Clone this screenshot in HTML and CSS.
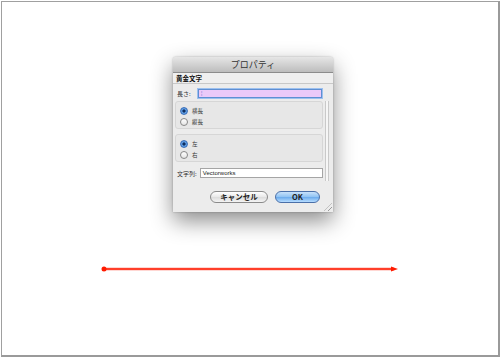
FILE: index.html
```html
<!DOCTYPE html>
<html lang="ja">
<head>
    <meta charset="UTF-8">
    <title>プロパティ</title>
    <link rel="stylesheet" href="styles.css">
</head>
<body>
    <div class="canvas">
        <div class="dialog">
            <div class="titlebar">プロパティ</div>
            <div class="header">黄金文字</div>
            <div class="field">
                <span class="label">長さ:</span>
                <span class="input focused">¦</span>
            </div>
            <div class="content">
                <div class="pane">
                    <div class="group">
                        <div class="radio"><span class="dot on"></span>横長</div>
                        <div class="radio"><span class="dot"></span>縦長</div>
                    </div>
                    <div class="group">
                        <div class="radio"><span class="dot on"></span>左</div>
                        <div class="radio"><span class="dot"></span>右</div>
                    </div>
                    <div class="field text-row">
                        <span class="label">文字列:</span>
                        <span class="input">Vectorworks</span>
                    </div>
                </div>
                <div class="track"></div>
            </div>
            <div class="buttons">
                <button class="btn">キャンセル</button>
                <button class="btn primary">OK</button>
            </div>
            <div class="grip"></div>
        </div>
        <svg class="shape" width="300" height="10" viewBox="0 0 300 10">
            <line x1="4" y1="5" x2="294" y2="5" stroke="#ffb0a8" stroke-width="3.2"/>
            <line x1="4" y1="5" x2="294" y2="5" stroke="#ff1a00" stroke-width="1.6"/>
            <circle cx="4" cy="5" r="2.5" fill="#ff1a00"/>
            <polygon points="291,2.6 298,5 291,7.4" fill="#ff1a00"/>
        </svg>
    </div>
</body>
</html>
```

FILE: styles.css
```css
body {
    margin: 0;
    background: #fff;
    font-family: "Liberation Sans", "Noto Sans CJK JP", sans-serif;
}
.canvas {
    margin: 1px 0 0 1px;
    width: 496px;
    height: 353px;
    border: 1px solid #a0a0a0;
    border-right: 2px solid #9a9a9a;
    border-bottom: 2px solid #9a9a9a;
    overflow: hidden;
}
.dialog {
    position: relative;
    margin: 55px 0 0 171px;
    width: 160px;
    height: 155px;
    background: #ececec;
    border-radius: 3px 3px 0 0;
    box-shadow: 0 9px 22px rgba(0, 0, 0, 0.45), 0 0 2px rgba(0, 0, 0, 0.3);
    display: flex;
    flex-direction: column;
}
.titlebar {
    height: 15px;
    line-height: 15px;
    text-align: center;
    font-family: "Noto Sans CJK JP", sans-serif;
    font-size: 9px;
    color: #333;
    background: linear-gradient(#e6e6e6, #bdbdbd);
    border-bottom: 1px solid #8c8c8c;
    border-radius: 3px 3px 0 0;
}
.header {
    height: 10px;
    line-height: 10px;
    padding-left: 3px;
    font-family: "Noto Sans CJK JP", sans-serif;
    font-size: 6.5px;
    font-weight: bold;
    color: #111;
    background: #efefef;
    border-bottom: 1px solid #c8c8c8;
}
.field {
    display: flex;
    align-items: center;
    height: 12px;
    margin-top: 3px;
    padding-left: 4px;
}
.label {
    width: 21px;
    font-family: "Noto Sans CJK JP", sans-serif;
    font-size: 6px;
    color: #333;
}
.input {
    width: 120px;
    height: 8px;
    line-height: 8px;
    padding-left: 2px;
    font-size: 6px;
    color: #222;
    background: #fff;
    border: 1px solid #a5a5a5;
}
.input.focused {
    height: 7px;
    line-height: 7px;
    background: #ebc9f9;
    border: 1px solid #5f8fd2;
    box-shadow: 0 0 0 1px #9cc0ef;
    color: #6a6ad0;
    font-size: 5px;
}
.content {
    display: flex;
    height: 80px;
    margin-top: 2px;
}
.pane {
    width: 148px;
    margin-left: 2px;
}
.group {
    height: 23px;
    margin-bottom: 5px;
    padding: 3px 0 0 4px;
    background: #e7e7e7;
    border: 1px solid #d6d6d6;
    border-radius: 3px;
}
.radio {
    display: flex;
    align-items: center;
    height: 11px;
    font-family: "Noto Sans CJK JP", sans-serif;
    font-size: 5.5px;
    color: #333;
}
.dot {
    width: 6px;
    height: 6px;
    margin-right: 4px;
    border: 1px solid #888;
    border-radius: 50%;
    background: linear-gradient(#fff, #e4e4e4);
}
.dot.on {
    border-color: #3c6fb8;
    background: radial-gradient(circle, #0c2c60 0, #0c2c60 1.4px, #6aa8ea 1.8px, #3f82d8 100%);
}
.text-row {
    margin-top: 0;
    padding-left: 2px;
}
.text-row .input {
    margin-left: 2px;
}
.track {
    width: 2px;
    margin-left: 2px;
    border-left: 1px solid #c9c9c9;
    border-right: 1px solid #c9c9c9;
    background: #f6f6f6;
}
.buttons {
    display: flex;
    gap: 7px;
    margin: 10px 0 0 37px;
}
.btn {
    height: 12px;
    padding: 0;
    font-family: "Noto Sans CJK JP", sans-serif;
    font-size: 7.5px;
    font-weight: bold;
    line-height: 10px;
    color: #222;
    border: 1px solid #8a8a8a;
    border-radius: 7px;
    background: linear-gradient(#ffffff, #e8e8e8 50%, #dcdcdc 51%, #f4f4f4);
    width: 58px;
}
.btn.primary {
    width: 45px;
    border-color: #4a6fa8;
    background: linear-gradient(#c8e2fb, #8ec2f3 50%, #6aaaec 51%, #b6dcff);
}
.grip {
    position: absolute;
    right: 1px;
    bottom: 1px;
    width: 8px;
    height: 8px;
    background: repeating-linear-gradient(135deg, transparent 0, transparent 2px, #9a9a9a 2px, #9a9a9a 3px);
    clip-path: polygon(100% 0, 100% 100%, 0 100%);
}
.shape {
    display: block;
    margin: 52px 0 0 98px;
}
```
